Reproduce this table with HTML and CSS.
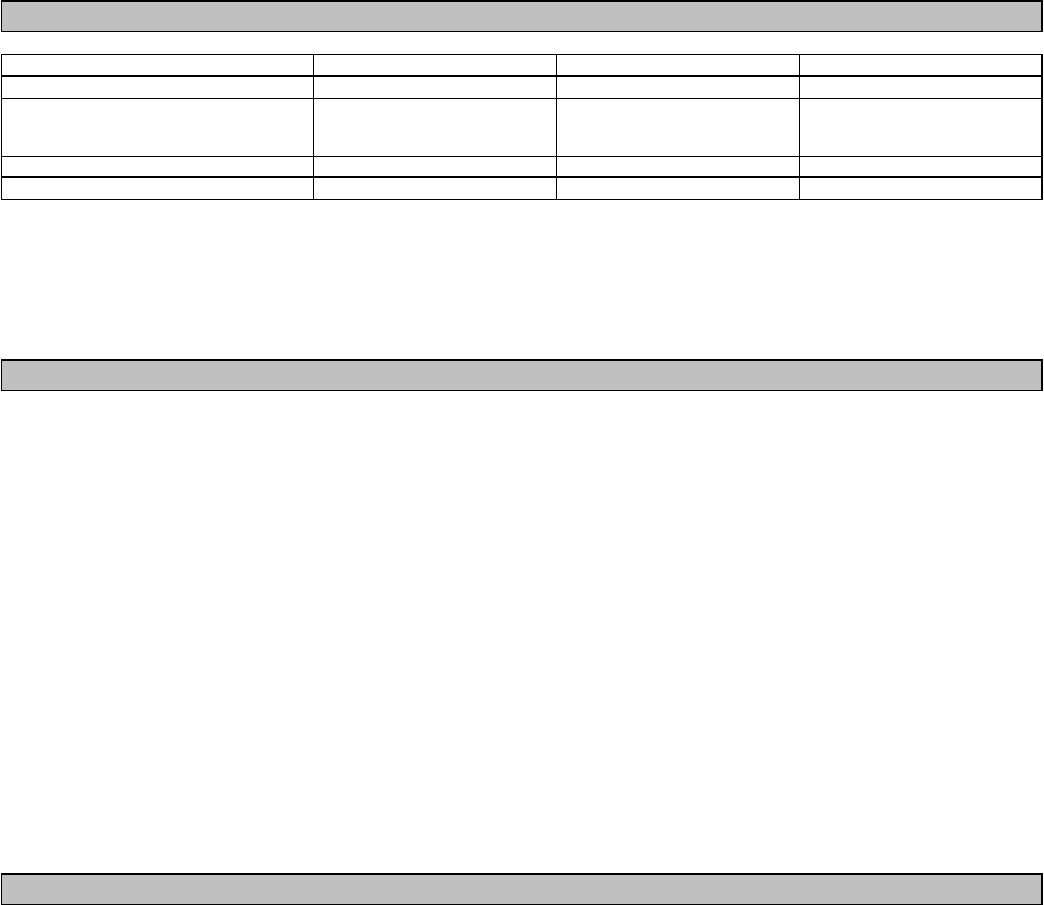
FILE: index.html
```html
<!DOCTYPE html>
<html>
<head>
<meta charset="utf-8">
<link rel="stylesheet" href="styles.css">
</head>
<body>
<div class="page">
  <section class="section first">
    <div class="bar"></div>
    <table class="grid">
      <tr class="r1 thick"><td class="c1"></td><td></td><td></td><td></td></tr>
      <tr class="r2"><td class="c1"></td><td></td><td></td><td></td></tr>
      <tr class="r3"><td class="c1"></td><td></td><td></td><td></td></tr>
      <tr class="r4 thick"><td class="c1"></td><td></td><td></td><td></td></tr>
      <tr class="r5"><td class="c1"></td><td></td><td></td><td></td></tr>
    </table>
  </section>
  <section class="section second">
    <div class="bar"></div>
  </section>
  <section class="section third">
    <div class="bar"></div>
  </section>
</div>
</body>
</html>
```
FILE: styles.css
```css
html, body {
  margin: 0;
  padding: 0;
  background: #ffffff;
  font-family: "Liberation Sans", Arial, sans-serif;
}
.page {
  padding: 0 1px 0 1px;
  display: flex;
  flex-direction: column;
}
.bar {
  box-sizing: border-box;
  height: 32px;
  background: #c0c0c0;
  border-top: 2px solid #000;
  border-left: 1px solid #000;
  border-right: 2px solid #000;
  border-bottom: 1px solid #000;
}
.first .grid {
  margin-top: 22px;
}
.grid {
  width: 100%;
  border-collapse: collapse;
  table-layout: fixed;
  border-top: 1px solid #000;
  border-left: 1px solid #000;
  border-right: 2px solid #000;
  border-bottom: 1px solid #000;
}
.grid td {
  border-left: 1px solid #000;
  border-bottom: 1px solid #000;
  padding: 0;
}
.grid td.c1 {
  width: 311px;
}
.grid tr.thick td {
  border-bottom: 2px solid #000;
}
.r1 td { height: 20px; }
.r2 td { height: 21px; }
.r3 td { height: 57px; }
.r4 td { height: 19px; }
.r5 td { height: 21px; }
.second {
  margin-top: 159px;
}
.third {
  margin-top: 482px;
}
```
